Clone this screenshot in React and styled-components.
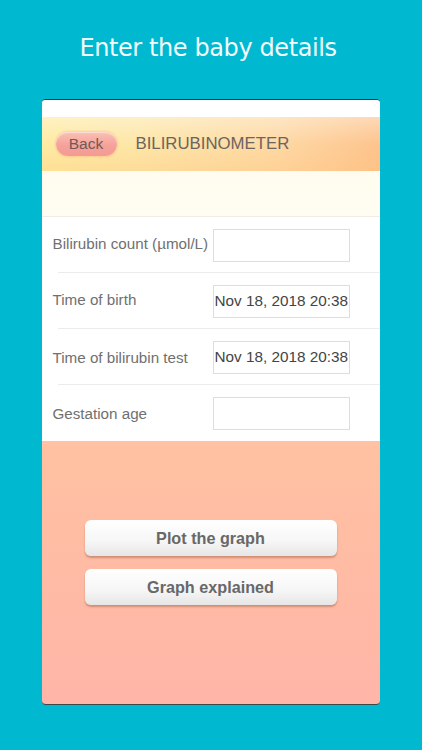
import React from 'react';
import styled, { createGlobalStyle } from 'styled-components';

const Global = createGlobalStyle`
  html, body {
    margin: 0;
    padding: 0;
    background: #00b9d1;
  }
  body {
    width: 422px;
    height: 750px;
    overflow: hidden;
    font-family: "Liberation Sans", Arial, sans-serif;
  }
`;

const Page = styled.div`
  display: flex;
  flex-direction: column;
  align-items: center;
  padding-top: 34px;
`;

const Heading = styled.h1`
  margin: 0 0 0 -6px;
  height: 65px;
  font-family: "DejaVu Sans", Verdana, sans-serif;
  font-weight: normal;
  font-size: 24px;
  color: #f2fbfc;
  letter-spacing: -0.4px;
`;

const Phone = styled.div`
  width: 338px;
  height: 606px;
  margin-left: -1px;
  border-radius: 4px;
  border-top: 1.5px solid #1d3a40;
  border-bottom: 1.5px solid #3a4a4c;
  box-sizing: border-box;
  overflow: hidden;
  display: flex;
  flex-direction: column;
  background: linear-gradient(180deg, #ffcf9e 0%, #ffc5a0 45%, #ffb5a8 100%);
`;

const StatusStrip = styled.div`
  height: 17px;
  background: #ffffff;
`;

const Header = styled.div`
  height: 54px;
  display: flex;
  align-items: center;
  padding-left: 14px;
  gap: 19px;
  background:
    linear-gradient(180deg, rgba(255,255,255,0.35) 0%, rgba(255,255,255,0) 50%, rgba(255,190,110,0.25) 100%),
    linear-gradient(90deg, #feeba3 0%, #fde6a8 30%, #fed8a4 70%, #fdc48e 100%);
`;

const BackButton = styled.button`
  width: 61px;
  height: 24px;
  border: none;
  border-radius: 12px;
  padding: 0;
  font-family: "Liberation Sans", Arial, sans-serif;
  font-size: 15.5px;
  color: #6e5a58;
  background: linear-gradient(180deg, #fbc1b4 0%, #f5a29a 55%, #f49a93 100%);
  box-shadow: 0 0 2px 1px rgba(255, 150, 120, 0.35), inset 0 1px 1px rgba(255,255,255,0.5);
`;

const Title = styled.div`
  font-size: 16.8px;
  color: #6c6460;
`;

const Spacer = styled.div`
  height: 45px;
  background: linear-gradient(180deg, #fffcef 0%, #fffdf3 100%);
  border-bottom: 1px solid #f1ede4;
`;

const Form = styled.div`
  background: #ffffff;
  display: flex;
  flex-direction: column;
`;

const Row = styled.div`
  height: 56px;
  display: flex;
  align-items: center;
  padding-left: 11px;
  position: relative;
  ${p => !p.$last && `
    &::after {
      content: '';
      position: absolute;
      left: 16px;
      right: 0;
      bottom: 0;
      height: 1px;
      background: #ececec;
    }
  `}
`;

const Label = styled.div`
  width: 160px;
  font-size: 15.2px;
  color: #707070;
  white-space: nowrap;
  margin-top: ${p => p.$up ? `-${p.$up}px` : '0'};
`;

const Field = styled.div`
  width: 134px;
  height: 31px;
  border: 1px solid #dcdaec;
  display: flex;
  align-items: center;
  padding-left: 1px;
  font-size: 15.3px;
  color: #444;
  white-space: nowrap;
  overflow: hidden;
`;

const Actions = styled.div`
  flex: 1;
  display: flex;
  flex-direction: column;
  align-items: center;
  padding-top: 79px;
  gap: 13px;
`;

const Action = styled.button`
  width: 252px;
  height: 36px;
  border: none;
  border-radius: 6px;
  font-family: "Liberation Sans", Arial, sans-serif;
  font-weight: bold;
  font-size: 16.2px;
  color: #686868;
  background: linear-gradient(180deg, #ffffff 0%, #f6f6f6 60%, #e6e6e6 100%);
  box-shadow: 0 2px 2px rgba(150, 90, 60, 0.45);
`;

const rows = [
  { label: 'Bilirubin count (µmol/L)', value: '', up: 3 },
  { label: 'Time of birth', value: 'Nov 18, 2018 20:38', up: 4 },
  { label: 'Time of bilirubin test', value: 'Nov 18, 2018 20:38' },
  { label: 'Gestation age', value: '' },
];

const App = () => {
  return (
    <Page>
      <Global />
      <Heading>Enter the baby details</Heading>
      <Phone>
        <StatusStrip />
        <Header>
          <BackButton>Back</BackButton>
          <Title>BILIRUBINOMETER</Title>
        </Header>
        <Spacer />
        <Form>
          {rows.map((r, i) => (
            <Row key={r.label} $last={i === rows.length - 1}>
              <Label $up={r.up}>{r.label}</Label>
              <Field>{r.value}</Field>
            </Row>
          ))}
        </Form>
        <Actions>
          <Action>Plot the graph</Action>
          <Action>Graph explained</Action>
        </Actions>
      </Phone>
    </Page>
  );
};

export default App;
